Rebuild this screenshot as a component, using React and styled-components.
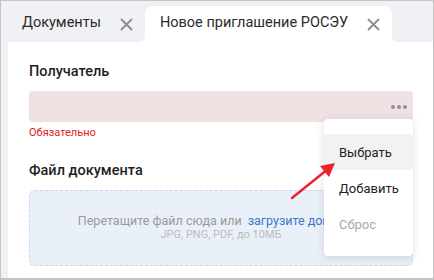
import React from 'react';
import styled, { createGlobalStyle } from 'styled-components';

const Global = createGlobalStyle`
    html, body {
        margin: 0;
        padding: 0;
        background: #ffffff;
    }
    * {
        box-sizing: border-box;
    }
    body {
        font-family: Roboto, "Liberation Sans", sans-serif;
    }
`;

const Window = styled.div`
    width: 434px;
    height: 280px;
    border: 1px solid #c4c4c4;
    border-bottom-width: 2px;
    background: #f0f1f5;
    display: flex;
    flex-direction: column;
    overflow: hidden;
`;

const TabBar = styled.div`
    height: 41px;
    display: flex;
    align-items: flex-end;
    padding-left: 7px;
`;

const Tab = styled.div`
    position: relative;
    height: 36px;
    display: flex;
    align-items: center;
    gap: 19px;
    padding: 0 12px 0 ${props => props.active ? '15px' : '14px'};
    font-size: 14.5px;
    color: #2b2b2b;
    background: ${props => props.active ? '#ffffff' : 'transparent'};
    border-radius: 7px 7px 0 0;
    ${props => props.active && `
        &::before, &::after {
            content: '';
            position: absolute;
            bottom: 0;
            width: 6px;
            height: 6px;
        }
        &::before {
            left: -6px;
            background: radial-gradient(circle at 0 0, transparent 6px, #ffffff 6.5px);
        }
        &::after {
            right: -6px;
            background: radial-gradient(circle at 100% 0, transparent 6px, #ffffff 6.5px);
        }
    `}
`;

const TabTitle = styled.span`
    line-height: 1;
    padding-bottom: 1px;
`;

const CloseIcon = styled.svg`
    width: 13px;
    height: 13px;
    display: block;
`;

const Panel = styled.div`
    flex: 1;
    margin-left: 7px;
    background: #ffffff;
    padding: 21px 20px 0 21px;
    position: relative;
`;

const Label = styled.div`
    font-size: 14.5px;
    font-weight: 500;
    color: #1f1f1f;
    line-height: 18px;
    margin-top: ${props => props.top || 0}px;
`;

const Field = styled.div`
    position: relative;
    margin-top: 10px;
    height: 31px;
    background: #f1e1e2;
    border-radius: 4px;
    display: flex;
    align-items: center;
    justify-content: flex-end;
    padding-right: 6px;
`;

const Dots = styled.svg`
    width: 16px;
    height: 4px;
    display: block;
`;

const ErrorText = styled.div`
    margin-top: 4px;
    font-size: 11px;
    color: #e0201c;
    line-height: 14px;
`;

const Drop = styled.div`
    margin-top: 10px;
    height: 76px;
    background: #eaf0f8;
    border: 1px dashed #c6d7ee;
    border-radius: 6px;
    display: flex;
    flex-direction: column;
    align-items: center;
    justify-content: center;
    padding-bottom: 2px;
`;

const DropMain = styled.div`
    font-size: 12.5px;
    color: #9a9a9a;
    line-height: 15px;
    white-space: nowrap;
`;

const DropLink = styled.span`
    color: #3b78c9;
    margin-left: 6px;
`;

const DropHint = styled.div`
    font-size: 11px;
    color: #bcbcbc;
    line-height: 14px;
`;

const Menu = styled.div`
    position: absolute;
    left: 316px;
    top: 77px;
    width: 89px;
    background: #ffffff;
    border-radius: 4px;
    box-shadow: 0 2px 10px rgba(0, 0, 0, 0.12);
    padding: 15px 0 14px;
    display: flex;
    flex-direction: column;
    z-index: 2;
`;

const MenuItem = styled.div`
    height: 36px;
    display: flex;
    align-items: center;
    padding-left: 15px;
    font-size: 13px;
    color: ${props => props.disabled ? '#a9a9a9' : '#222222'};
    background: ${props => props.hover ? '#f1f2f2' : 'transparent'};
    border-radius: ${props => props.hover ? '4px' : '0'};
`;

const Arrow = styled.svg`
    position: absolute;
    left: 276px;
    top: 118px;
    width: 54px;
    height: 44px;
    z-index: 3;
    overflow: visible;
`;

const Close = () => (
    <CloseIcon viewBox="0 0 13 13">
        <path d="M1.5 1.5 L11.5 11.5 M11.5 1.5 L1.5 11.5" stroke="#8c8c8c" strokeWidth="1.8" strokeLinecap="round" />
    </CloseIcon>
);

export default function App() {
    return (
        <>
            <Global />
            <Window>
                <TabBar>
                    <Tab>
                        <TabTitle>Документы</TabTitle>
                        <Close />
                    </Tab>
                    <Tab active>
                        <TabTitle>Новое приглашение РОСЭУ</TabTitle>
                        <Close />
                    </Tab>
                </TabBar>
                <Panel>
                    <Label>Получатель</Label>
                    <Field>
                        <Dots viewBox="0 0 16 4">
                            <circle cx="2" cy="2" r="2" fill="#8794a3" />
                            <circle cx="8" cy="2" r="2" fill="#8794a3" />
                            <circle cx="14" cy="2" r="2" fill="#8794a3" />
                        </Dots>
                    </Field>
                    <ErrorText>Обязательно</ErrorText>
                    <Label top={22}>Файл документа</Label>
                    <Drop>
                        <DropMain>
                            Перетащите файл сюда или<DropLink>загрузите документ</DropLink>
                        </DropMain>
                        <DropHint>JPG, PNG, PDF, до 10МБ</DropHint>
                    </Drop>
                    <Menu>
                        <MenuItem hover>Выбрать</MenuItem>
                        <MenuItem>Добавить</MenuItem>
                        <MenuItem disabled>Сброс</MenuItem>
                    </Menu>
                    <Arrow viewBox="0 0 54 44">
                        <line x1="8" y1="38" x2="44" y2="9" stroke="#e8232a" strokeWidth="2.4" strokeLinecap="round" />
                        <polygon points="51,3 36,6 45,17" fill="#e8232a" />
                    </Arrow>
                </Panel>
            </Window>
        </>
    );
}
